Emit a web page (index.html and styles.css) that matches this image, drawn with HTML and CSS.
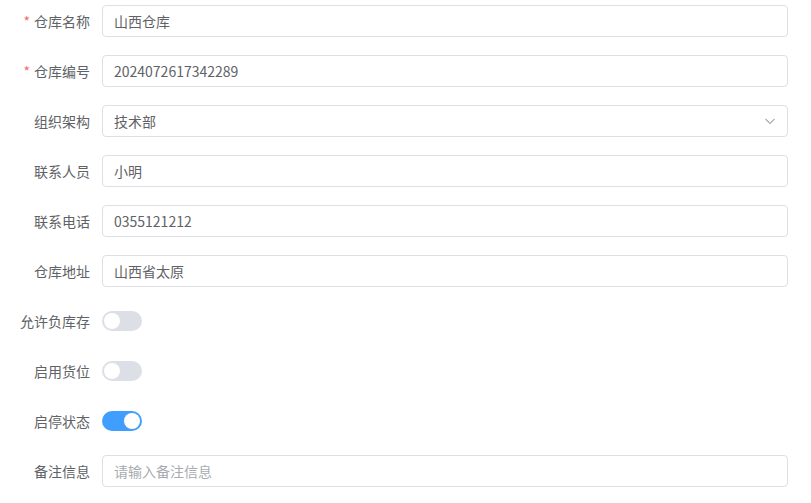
FILE: index.html
```html
<!DOCTYPE html>
<html lang="zh">
<head>
  <meta charset="UTF-8">
  <title>仓库信息</title>
  <link rel="stylesheet" href="styles.css">
</head>
<body>

  <form class="form">
    <div class="item">
      <label class="label required">仓库名称</label>
      <div class="input"><span class="value">山西仓库</span></div>
    </div>

    <div class="item">
      <label class="label required">仓库编号</label>
      <div class="input"><span class="value">2024072617342289</span></div>
    </div>

    <div class="item">
      <label class="label">组织架构</label>
      <div class="input select">
        <span class="value">技术部</span>
        <svg class="arrow" width="14" height="14" viewBox="0 0 14 14">
          <path d="M2.5 5 L7 9.5 L11.5 5" fill="none" stroke="#a8abb2" stroke-width="1.1"/>
        </svg>
      </div>
    </div>

    <div class="item">
      <label class="label">联系人员</label>
      <div class="input"><span class="value">小明</span></div>
    </div>

    <div class="item">
      <label class="label">联系电话</label>
      <div class="input"><span class="value">0355121212</span></div>
    </div>

    <div class="item">
      <label class="label">仓库地址</label>
      <div class="input"><span class="value">山西省太原</span></div>
    </div>

    <div class="item">
      <label class="label">允许负库存</label>
      <span class="switch"><span class="thumb"></span></span>
    </div>

    <div class="item">
      <label class="label">启用货位</label>
      <span class="switch"><span class="thumb"></span></span>
    </div>

    <div class="item">
      <label class="label">启停状态</label>
      <span class="switch on"><span class="thumb"></span></span>
    </div>

    <div class="item">
      <label class="label">备注信息</label>
      <div class="input"><span class="value placeholder">请输入备注信息</span></div>
    </div>
  </form>

</body>
</html>
```

FILE: styles.css
```css
body {
  margin: 0;
  background: #fff;
  font-family: "Microsoft YaHei", "Noto Sans CJK SC", "Liberation Sans", sans-serif;
  font-size: 14px;
  color: #606266;
}

.form {
  width: 788px;
  padding-top: 5px;
}

.item {
  display: flex;
  align-items: center;
  height: 32px;
  margin-bottom: 18px;
}

.label {
  width: 102px;
  box-sizing: border-box;
  padding-right: 12px;
  text-align: right;
  line-height: 32px;
  flex-shrink: 0;
}

.required::before {
  content: "*";
  color: #f56c6c;
  margin-right: 4px;
}

.input {
  flex: 1;
  height: 32px;
  box-sizing: border-box;
  border: 1px solid #dcdfe6;
  border-radius: 4px;
  padding: 0 11px;
  display: flex;
  align-items: center;
}

.value {
  line-height: 30px;
}

.placeholder {
  color: #a8abb2;
}

.select {
  justify-content: space-between;
}

.arrow {
  margin-right: -1px;
}

.switch {
  position: relative;
  display: inline-block;
  width: 40px;
  height: 20px;
  border-radius: 10px;
  background: #dcdfe6;
}

.switch .thumb {
  position: absolute;
  top: 2px;
  left: 2px;
  width: 16px;
  height: 16px;
  border-radius: 50%;
  background: #fff;
}

.switch.on {
  background: #409eff;
}

.switch.on .thumb {
  left: 22px;
}
```
